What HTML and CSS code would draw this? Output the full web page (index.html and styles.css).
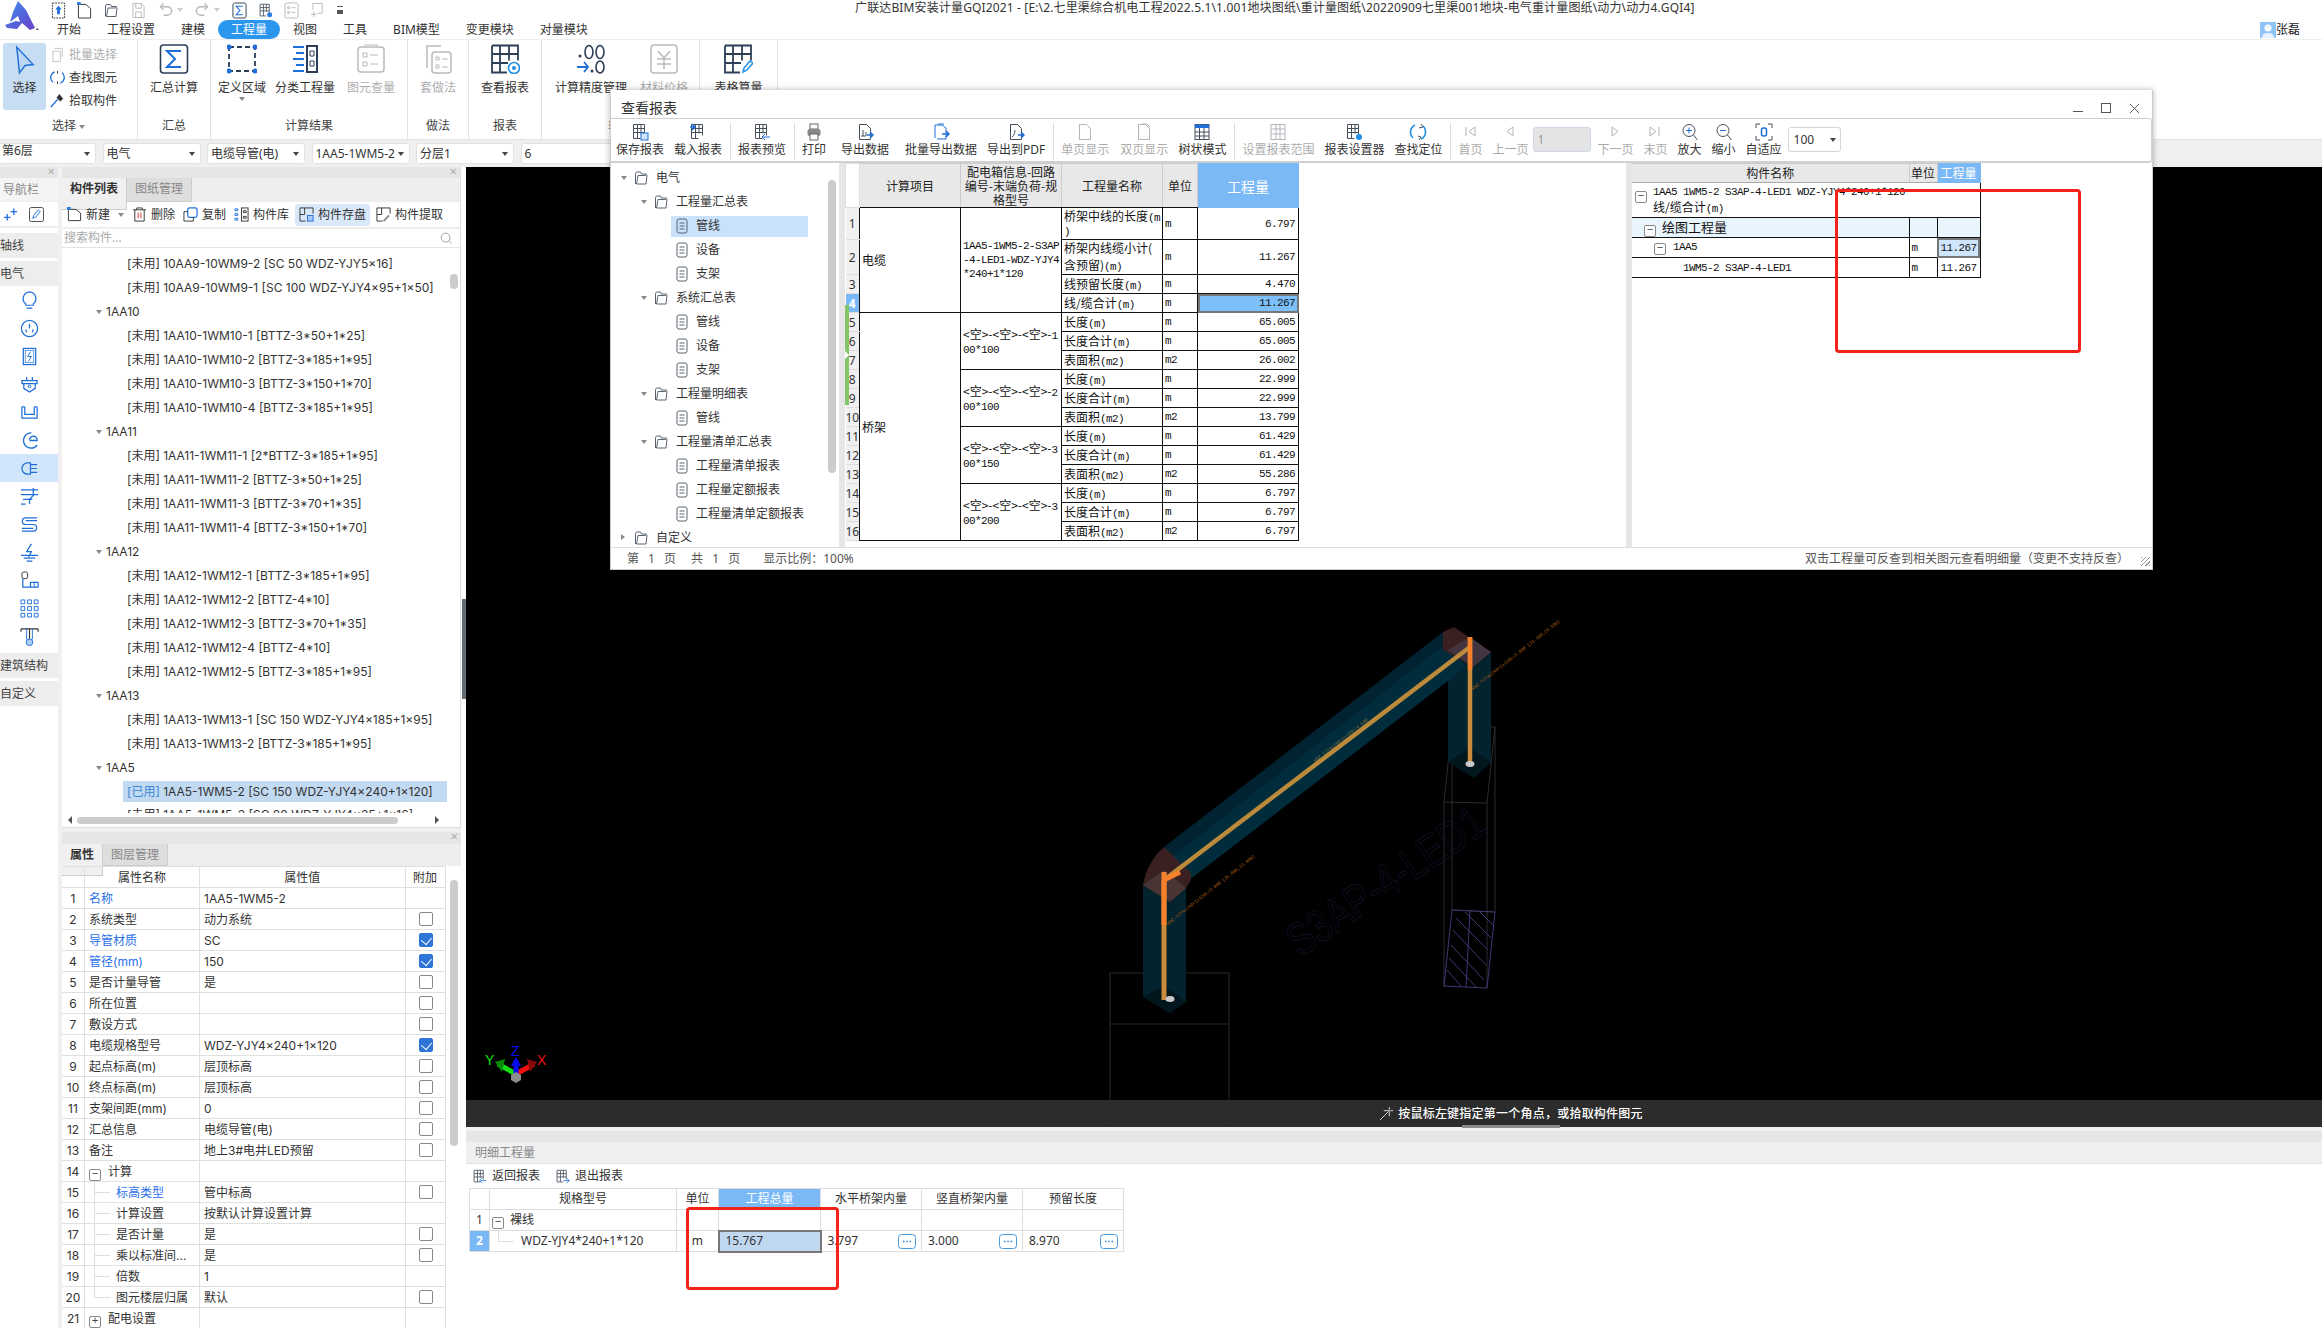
FILE: index.html
```html
<!DOCTYPE html>
<html lang="zh-CN">
<head>
<meta charset="utf-8">
<title>广联达BIM安装计量GQI2021</title>
<link rel="stylesheet" href="styles.css">
</head>
<body>
<svg class="defs" width="0" height="0" aria-hidden="true">
  <symbol id="g" viewBox="0 0 18 18"><path d="M2.5 1.5h11v11M2.5 1.5v14h7M2.5 5.5h11M2.5 9.5h11M6.5 1.5v14M10 1.5v9" fill="none" stroke="#46505c"/></symbol>
  <symbol id="doc" viewBox="0 0 18 18"><path d="M3.5 1.5h7l4 4v11h-11z" fill="none" stroke="#46505c"/></symbol>
  <symbol id="list" viewBox="0 0 12 16"><rect x="1" y="1" width="10" height="14" rx="2" fill="none" stroke="#5a6470"/><path d="M3.5 5h5M3.5 8h5M3.5 11h5" stroke="#5a6470"/></symbol>
  <symbol id="folder" viewBox="0 0 15 16"><path d="M1.5 14V3.5l1-1.5h4l1 2h5l-1 1.5H4L2.5 14h9.500l1-9" fill="none" stroke="#5a6470"/></symbol>
  <symbol id="mag" viewBox="0 0 18 18"><circle cx="8" cy="7.500" r="6" fill="none" stroke="#46505c"/><path d="M12.500 12l4 5" stroke="#46505c"/></symbol>
  <symbol id="more" viewBox="0 0 18 15"><rect x=".5" y=".5" width="17" height="14" rx="3" fill="#fff" stroke="#4a9ade"/><path d="M5 7.500h1.500M8.300 7.500h1.500M11.600 7.500h1.500" stroke="#2f7fd0" stroke-width="1.500"/></symbol>
</svg>

<div class="app">
  <header class="top">
    <svg class="logo" viewBox="0 0 36 32"><defs><linearGradient id="lg" x1="0" y1="0" x2="1" y2="1"><stop offset="0" stop-color="#3d8ef0"/><stop offset="1" stop-color="#6a3fc8"/></linearGradient></defs><path d="M15 1l8 9 9 18-5 2-8-7-5 6-10-1-2-3 11-4 4 1-2-6-8 6 3-10z" fill="url(#lg)"/><path d="M34 28l2 2h-3z" fill="#444"/></svg>
    <div class="top-rows">
      <div class="qa">
        <svg class="qi" viewBox="0 0 16 18"><rect x="1.500" y="1" width="13" height="16" fill="none" stroke="#333" stroke-dasharray="2 1"/><path d="M8 4l3.500 4H9.500v5h-3V8H4.500z" fill="#1f6fd8"/></svg>
        <svg class="qi qg1" viewBox="0 0 16 18"><path d="M1.500 2.500h8l5 4.500v10h-13z" fill="none" stroke="#333"/><path d="M0 0h4v3H0z" fill="#2a7fe0"/></svg>
        <svg class="qi qg2" viewBox="0 0 16 18"><use href="#folder" width="16" height="18"/></svg>
        <svg class="qi qg2 off" viewBox="0 0 16 18"><path d="M2 1.500h9l3 3v12H2zM5 1.500v5h6v-5M5 16.500v-6h6v6" fill="none" stroke="#555"/></svg>
        <svg class="qi qg3 off" viewBox="0 0 16 18"><path d="M4 5h6a4.500 4.500 0 0 1 0 9H6M6 1.500L2.500 5 6 8.500" fill="none" stroke="#555" stroke-width="1.500"/></svg>
        <span class="caret off"></span>
        <svg class="qi qg4 off" viewBox="0 0 16 18"><path d="M12 5H6a4.500 4.500 0 0 0 0 9h4M10 1.500L13.500 5 10 8.500" fill="none" stroke="#555" stroke-width="1.500"/></svg>
        <span class="caret off"></span>
        <svg class="qi qg5" viewBox="0 0 16 18"><rect x="1" y="1" width="14" height="16" rx="2" fill="none" stroke="#2c3f58"/><path d="M11.500 4.500h-7l4 4.500-4 4.500h7" fill="none" stroke="#1f6fd8" stroke-width="1.200"/></svg>
        <svg class="qi qg6" viewBox="0 0 18 18"><use href="#g"/><circle cx="14" cy="14" r="3" fill="#2a7fe0"/></svg>
        <svg class="qi qg6 off" viewBox="0 0 16 18"><rect x="1" y="1" width="14" height="16" rx="2" fill="none" stroke="#555"/><path d="M4 5h2v2H4zM4 10h2v2H4zM8 6h4M8 11h4" fill="none" stroke="#555"/></svg>
        <svg class="qi qg6 off" viewBox="0 0 16 18"><path d="M3 8V1.500h10V12H8M1 13h6M4 10v6" fill="none" stroke="#555"/></svg>
        <span class="qmore"></span>
      </div>
      <div class="title">广联达BIM安装计量GQI2021 - [E:\2.七里渠综合机电工程2022.5.1\1.001地块图纸\重计量图纸\20220909七里渠001地块-电气重计量图纸\动力\动力4.GQI4]</div>
      <nav class="tabs">
        <span class="tab">开始</span><span class="tab">工程设置</span><span class="tab">建模</span><span class="tab active">工程量</span><span class="tab">视图</span><span class="tab">工具</span><span class="tab">BIM模型</span><span class="tab">变更模块</span><span class="tab">对量模块</span>
        <span class="user"><svg class="avatar" viewBox="0 0 16 16"><rect width="16" height="16" fill="#8fc4fb"/><circle cx="8" cy="6" r="3.500" fill="#fff"/><path d="M2 16c0-4 3-5 6-5s6 1 6 5z" fill="#e8f3fe"/><path d="M4 5h8" stroke="#cfe5fc"/></svg>张磊</span>
      </nav>
    </div>
  </header>

  <section class="ribbon">
    <div class="rg w138">
      <div class="rg-body sel">
        <div class="select-big">
          <svg class="bigicon cur" viewBox="0 0 24 32"><path d="M3 2l18 19-9 1-6 8z" fill="#bcd8f5" stroke="#1f6fd8" stroke-width="1.600"/></svg>
          <span>选择</span>
        </div>
        <div class="small-col">
          <div class="sm off"><svg class="i15" viewBox="0 0 16 16"><path d="M5 1.500h8v9M3 4.500h8v11H3z" fill="none" stroke="#666"/></svg>批量选择</div>
          <div class="sm"><svg class="i15" viewBox="0 0 16 16"><path d="M5 2a6.500 6.500 0 0 0-2 11M11 14a6.500 6.500 0 0 0 2-11" fill="none" stroke="#1f6fd8" stroke-width="1.400"/><path d="M8 1v3M8 12v3" stroke="#333"/></svg>查找图元</div>
          <div class="sm"><svg class="i15" viewBox="0 0 16 16"><path d="M1 15l7-8" stroke="#1f6fd8" stroke-width="1.500"/><path d="M7 5l4 4 3-3-4-5z" fill="#333"/></svg>拾取构件</div>
        </div>
      </div>
      <div class="rg-label">选择 <span class="caret"></span></div>
    </div>
    <div class="rg w73">
      <div class="rg-body center">
        <div class="rb"><svg class="bigicon" viewBox="0 0 30 30"><rect x="1.500" y="1" width="27" height="28" rx="3" fill="none" stroke="#2c3f58" stroke-width="1.600"/><path d="M22 7H8l8 8-8 8h14" fill="none" stroke="#1f6fd8" stroke-width="2"/></svg><span>汇总计算</span></div>
      </div>
      <div class="rg-label">汇总</div>
    </div>
    <div class="rg w197">
      <div class="rg-body calc">
        <div class="rb"><svg class="bigicon" viewBox="0 0 30 30"><rect x="2" y="3" width="26" height="24" fill="none" stroke="#2c3f58" stroke-width="1.800" stroke-dasharray="5 3"/><path d="M2 3h.1M28 3h.1M2 27h.1M28 27h.1" stroke="#1f6fd8" stroke-width="5" stroke-linecap="round"/></svg><span>定义区域</span><i class="caret drop"></i></div>
        <div class="rb"><svg class="bigicon" viewBox="0 0 30 30"><path d="M3 3h11M6 9h8M3 15h11M6 21h8M3 27h11" stroke="#1f6fd8" stroke-width="2"/><rect x="17" y="2" width="10" height="26" fill="none" stroke="#2c3f58" stroke-width="2"/><path d="M20 7h4v5h-4zM20 17h4v5h-4z" fill="none" stroke="#2c3f58"/></svg><span>分类工程量</span></div>
        <div class="rb off"><svg class="bigicon" viewBox="0 0 30 30"><rect x="2" y="3" width="26" height="25" rx="3" fill="none" stroke="#555" stroke-width="1.500"/><path d="M7 9h4v4H7zM7 18h4v4H7zM14 11h8M14 20h8M8 1h14" fill="none" stroke="#555"/></svg><span>图元查量</span></div>
      </div>
      <div class="rg-label">计算结果</div>
    </div>
    <div class="rg w61">
      <div class="rg-body center">
        <div class="rb off"><svg class="bigicon" viewBox="0 0 30 30"><path d="M4 24V2h14" fill="none" stroke="#555" stroke-width="1.500"/><rect x="9" y="8" width="19" height="21" rx="3" fill="none" stroke="#555" stroke-width="1.500"/><path d="M13 13h3v3h-3zM13 21h3v3h-3zM19 15h6M19 23h6" fill="none" stroke="#555"/></svg><span>套做法</span></div>
      </div>
      <div class="rg-label">做法</div>
    </div>
    <div class="rg w73">
      <div class="rg-body center">
        <div class="rb"><svg class="bigicon" viewBox="0 0 30 30"><path d="M2 1.500h26v15M2 1.500v27h15M2 10h26M2 19h16M10 1.500v27M19 1.500v15" fill="none" stroke="#2c3f58" stroke-width="1.800"/><circle cx="24" cy="24" r="5.500" fill="#fff" stroke="#1f8fe8" stroke-width="1.600"/><circle cx="24" cy="24" r="2" fill="#1f8fe8"/></svg><span>查看报表</span></div>
      </div>
      <div class="rg-label">报表</div>
    </div>
    <div class="rg w158">
      <div class="rg-body assist">
        <div class="rb"><svg class="bigicon" viewBox="0 0 30 30"><circle cx="4" cy="12" r="1.500" fill="#2c3f58"/><ellipse cx="13" cy="8" rx="4" ry="6.500" fill="none" stroke="#2c3f58" stroke-width="1.600"/><ellipse cx="24" cy="8" rx="4" ry="6.500" fill="none" stroke="#2c3f58" stroke-width="1.600"/><path d="M1 23h11M8 18l4 5-4 5" fill="none" stroke="#1f6fd8" stroke-width="1.800"/><circle cx="16" cy="27" r="1.500" fill="#2c3f58"/><ellipse cx="24" cy="23" rx="4" ry="6" fill="none" stroke="#2c3f58" stroke-width="1.600"/></svg><span>计算精度管理</span></div>
        <div class="rb off"><svg class="bigicon" viewBox="0 0 30 30"><rect x="2" y="1" width="26" height="28" rx="3" fill="none" stroke="#555" stroke-width="1.500"/><path d="M9 7l6 7 6-7M8 15h14M8 20h14M15 14v11" fill="none" stroke="#555" stroke-width="1.500"/></svg><span>材料价格</span></div>
      </div>
      <div class="rg-label">辅助</div>
    </div>
    <div class="rg w78">
      <div class="rg-body center">
        <div class="rb"><svg class="bigicon" viewBox="0 0 30 30"><path d="M2 1.500h26v15M2 1.500v27h15M2 10h26M2 19h16M10 1.500v27M19 1.500v15" fill="none" stroke="#2c3f58" stroke-width="1.800"/><path d="M20 28l1-4 6-7 3 2-6 7z" fill="none" stroke="#1f8fe8" stroke-width="1.500"/></svg><span>表格算量</span></div>
      </div>
      <div class="rg-label">&nbsp;</div>
    </div>
  </section>

  <section class="selectors">
    <div class="sbox first">第6层<i class="caret dark"></i></div>
    <div class="sbox">电气<i class="caret dark"></i></div>
    <div class="sbox">电缆导管(电)<i class="caret dark"></i></div>
    <div class="sbox">1AA5-1WM5-2<i class="caret dark"></i></div>
    <div class="sbox">分层1<i class="caret dark"></i></div>
    <div class="sbox">6</div>
  </section>

  <section class="work">
    <aside class="nav">
      <div class="close-band"><span class="x">×</span></div>
      <div class="nav-title">导航栏</div>
      <div class="nav-tools">
        <svg class="i15" viewBox="0 0 16 16"><path d="M1 11h7M4.500 7.500v7M8 5h7M11.500 1.500v7" stroke="#1f6fd8" stroke-width="1.400"/></svg>
        <svg class="nav-edit" viewBox="0 0 16 16"><rect x=".5" y=".5" width="15" height="15" rx="2" fill="none" stroke="#444"/><path d="M4 12l1-3 5-6 2 2-5 6z" fill="none" stroke="#1f6fd8"/></svg>
      </div>
      <div class="nav-head">轴线</div>
      <div class="nav-head">电气</div>
      <div class="nav-ic"><svg viewBox="0 0 20 20"><path d="M10 1a7 7 0 0 0-4 12.500V15h8v-1.500A7 7 0 0 0 10 1zM7 18h6" fill="none" stroke="#1f6fd8" stroke-width="1.300"/></svg></div>
      <div class="nav-ic"><svg viewBox="0 0 20 20"><circle cx="10" cy="10" r="8.500" fill="none" stroke="#1f6fd8" stroke-width="1.300"/><path d="M10 5v5M6 11l1 3M14 11l-1 3" stroke="#1f6fd8" stroke-width="1.300"/></svg></div>
      <div class="nav-ic"><svg viewBox="0 0 20 20"><rect x="3.500" y="1.500" width="13" height="17" fill="none" stroke="#1f6fd8" stroke-width="1.300"/><rect x="5.500" y="3.500" width="9" height="13" fill="none" stroke="#1f6fd8" stroke-width=".7"/><path d="M11 5l-3 5h4l-3 5" fill="none" stroke="#1f6fd8"/></svg></div>
      <div class="nav-ic"><svg viewBox="0 0 20 20"><path d="M2 6h16v3H2zM4 9v5l6 4 6-4V9M7 6V2M13 6V2" fill="none" stroke="#1f6fd8" stroke-width="1.300"/><circle cx="10" cy="12" r="1.500" fill="none" stroke="#1f6fd8"/></svg></div>
      <div class="nav-ic"><svg viewBox="0 0 20 20"><path d="M2 4v12h16V4M5 4v8h10V4M2 4h3M15 4h3" fill="none" stroke="#1f6fd8" stroke-width="1.300"/></svg></div>
      <div class="nav-ic"><svg viewBox="0 0 20 20"><path d="M12 2a8 8 0 1 0 6 13M10 10h8a4 4 0 0 0-8-1" fill="none" stroke="#1f6fd8" stroke-width="1.500"/></svg></div>
      <div class="nav-ic on"><svg viewBox="0 0 20 20"><path d="M8 4a6 6 0 0 0 0 12h3V4zM11 6h7M11 10h7M11 14h7" fill="none" stroke="#1f6fd8" stroke-width="1.300"/></svg></div>
      <div class="nav-ic"><svg viewBox="0 0 20 20"><path d="M1 3h18M1 8h18M3 13h10M1 18h5M14 1v8l-4 4v5" fill="none" stroke="#1f6fd8" stroke-width="1.300"/></svg></div>
      <div class="nav-ic"><svg viewBox="0 0 20 20"><path d="M18 3H6a3.500 3.500 0 0 0 0 7h8a3.500 3.500 0 0 1 0 7H2M18 6H6M2 14h12" fill="none" stroke="#1f6fd8" stroke-width="1.300"/></svg></div>
      <div class="nav-ic"><svg viewBox="0 0 20 20"><path d="M12 1L7 9h5l-3 6M1 13h18M4 16h12M7 19h6" fill="none" stroke="#1f6fd8" stroke-width="1.300"/></svg></div>
      <div class="nav-ic"><svg viewBox="0 0 20 20"><rect x="2" y="1" width="6" height="7" rx="2" fill="none" stroke="#333"/><path d="M3 8v9h8v-5h8v5h-8" fill="none" stroke="#1f6fd8" stroke-width="1.300"/><path d="M15 12v5" stroke="#1f6fd8"/></svg></div>
      <div class="nav-ic"><svg viewBox="0 0 20 20"><path d="M1 1h4v4H1zM8 1h4v4H8zM15 1h4v4h-4zM1 8h4v4H1zM8 8h4v4H8zM15 8h4v4h-4zM1 15h4v4H1zM8 15h4v4H8zM15 15h4v4h-4z" fill="none" stroke="#1f6fd8"/></svg></div>
      <div class="nav-ic"><svg viewBox="0 0 20 20"><path d="M1 2h18M1 2v3M19 2v3M10 2v11" stroke="#333" fill="none" stroke-width="1.200"/><path d="M7 2v11M13 2v11" stroke="#1f6fd8"/><circle cx="10" cy="16" r="3.500" fill="#a9cdf5" stroke="#1f6fd8"/></svg></div>
      <div class="nav-head">建筑结构</div>
      <div class="nav-head">自定义</div>
    </aside>

    <div class="leftcol">
      <section class="panel listp">
        <div class="close-band"><span class="x">×</span></div>
        <div class="ptabs"><span class="ptab cur">构件列表</span><span class="ptab w65">图纸管理</span></div>
        <div class="ltools">
          <span class="lt"><svg class="i15" viewBox="0 0 16 16"><path d="M1.500 2.500h8l5 4v8h-13z" fill="none" stroke="#333"/><path d="M0 0h4v3H0z" fill="#2a7fe0"/></svg>新建<i class="caret"></i></span>
          <span class="lt"><svg class="i15" viewBox="0 0 16 16"><path d="M1 3h14M5 3V1h6v2M3 3v12h10V3" fill="none" stroke="#333"/><path d="M6.500 6v6M9.500 6v6" stroke="#e02020"/></svg>删除</span>
          <span class="lt"><svg class="i15" viewBox="0 0 16 16"><rect x="5" y="1" width="10" height="10" rx="2" fill="none" stroke="#1f6fd8" stroke-width="1.300"/><path d="M5 5H1v10h10v-4" fill="none" stroke="#333"/></svg>复制</span>
          <span class="lt"><svg class="i15" viewBox="0 0 16 16"><path d="M1 2h3v2H1zM1 7h3v2H1zM1 12h3v2H1z" fill="none" stroke="#1f6fd8"/><rect x="8" y="1" width="7" height="14" fill="none" stroke="#333"/><path d="M10 4h3v2h-3zM10 10h3v2h-3z" fill="none" stroke="#333"/></svg>构件库</span>
          <span class="lt hot"><svg class="i15" viewBox="0 0 16 16"><path d="M15 7V1H1v14h6M1 8h5M6 1v7" fill="none" stroke="#333"/><rect x="9" y="9" width="6" height="6" fill="#a9cdf5" stroke="#1f6fd8"/></svg>构件存盘</span>
          <span class="lt"><svg class="i15" viewBox="0 0 16 16"><path d="M15 7V1H1v14h6M1 8h5M6 1v7" fill="none" stroke="#333"/><path d="M8 15l6-6" stroke="#888" stroke-width="2"/></svg>构件提取</span>
        </div>
        <div class="search"><span>搜索构件...</span><svg class="i12" viewBox="0 0 14 14"><circle cx="6" cy="6" r="4.800" fill="none" stroke="#999"/><path d="M9.500 9.500l3 3" stroke="#999"/></svg></div>
        <div class="lbody">
          <div class="li">[未用] 10AA9-10WM9-2 [SC 50 WDZ-YJY5x16]</div>
          <div class="li">[未用] 10AA9-10WM9-1 [SC 100 WDZ-YJY4x95+1x50]</div>
          <div class="lg">1AA10</div>
          <div class="li">[未用] 1AA10-1WM10-1 [BTTZ-3*50+1*25]</div>
          <div class="li">[未用] 1AA10-1WM10-2 [BTTZ-3*185+1*95]</div>
          <div class="li">[未用] 1AA10-1WM10-3 [BTTZ-3*150+1*70]</div>
          <div class="li">[未用] 1AA10-1WM10-4 [BTTZ-3*185+1*95]</div>
          <div class="lg">1AA11</div>
          <div class="li">[未用] 1AA11-1WM11-1 [2*BTTZ-3*185+1*95]</div>
          <div class="li">[未用] 1AA11-1WM11-2 [BTTZ-3*50+1*25]</div>
          <div class="li">[未用] 1AA11-1WM11-3 [BTTZ-3*70+1*35]</div>
          <div class="li">[未用] 1AA11-1WM11-4 [BTTZ-3*150+1*70]</div>
          <div class="lg">1AA12</div>
          <div class="li">[未用] 1AA12-1WM12-1 [BTTZ-3*185+1*95]</div>
          <div class="li">[未用] 1AA12-1WM12-2 [BTTZ-4*10]</div>
          <div class="li">[未用] 1AA12-1WM12-3 [BTTZ-3*70+1*35]</div>
          <div class="li">[未用] 1AA12-1WM12-4 [BTTZ-4*10]</div>
          <div class="li">[未用] 1AA12-1WM12-5 [BTTZ-3*185+1*95]</div>
          <div class="lg">1AA13</div>
          <div class="li">[未用] 1AA13-1WM13-1 [SC 150 WDZ-YJY4x185+1x95]</div>
          <div class="li">[未用] 1AA13-1WM13-2 [BTTZ-3*185+1*95]</div>
          <div class="lg">1AA5</div>
          <div class="li act"><span class="used">[已用]</span> 1AA5-1WM5-2 [SC 150 WDZ-YJY4x240+1x120]</div>
          <div class="li">[未用] 1AA5-1WM5-3 [SC 80 WDZ-YJY4x35+1x16]</div>
          <span class="vthumb"></span>
        </div>
        <div class="hscroll"><i class="tri-l"></i><span class="hthumb"></span><i class="tri-r"></i></div>
      </section>

      <section class="panel attrp">
        <div class="close-band tall"><span class="x">×</span></div>
        <div class="ptabs h22"><span class="ptab cur w41">属性</span><span class="ptab w65">图层管理</span></div>
        <div class="attr-wrap">
        <table class="attr">
          <colgroup><col class="c1"><col class="c2"><col class="c3"><col class="c4"></colgroup>
          <thead><tr><th></th><th>属性名称</th><th>属性值</th><th>附加</th></tr></thead>
          <tbody>
            <tr><td class="n">1</td><td class="blue">名称</td><td>1AA5-1WM5-2</td><td></td></tr>
            <tr><td class="n">2</td><td>系统类型</td><td>动力系统</td><td><i class="cb"></i></td></tr>
            <tr><td class="n">3</td><td class="blue">导管材质</td><td>SC</td><td><i class="cb on"></i></td></tr>
            <tr><td class="n">4</td><td class="blue">管径(mm)</td><td>150</td><td><i class="cb on"></i></td></tr>
            <tr><td class="n">5</td><td>是否计量导管</td><td>是</td><td><i class="cb"></i></td></tr>
            <tr><td class="n">6</td><td>所在位置</td><td></td><td><i class="cb"></i></td></tr>
            <tr><td class="n">7</td><td>敷设方式</td><td></td><td><i class="cb"></i></td></tr>
            <tr><td class="n">8</td><td>电缆规格型号</td><td>WDZ-YJY4x240+1x120</td><td><i class="cb on"></i></td></tr>
            <tr><td class="n">9</td><td>起点标高(m)</td><td>层顶标高</td><td><i class="cb"></i></td></tr>
            <tr><td class="n">10</td><td>终点标高(m)</td><td>层顶标高</td><td><i class="cb"></i></td></tr>
            <tr><td class="n">11</td><td>支架间距(mm)</td><td>0</td><td><i class="cb"></i></td></tr>
            <tr><td class="n">12</td><td>汇总信息</td><td>电缆导管(电)</td><td><i class="cb"></i></td></tr>
            <tr><td class="n">13</td><td>备注</td><td>地上3#电井LED预留</td><td><i class="cb"></i></td></tr>
            <tr><td class="n">14</td><td class="grp"><i class="pm">−</i>计算</td><td></td><td></td></tr>
            <tr><td class="n">15</td><td class="sub blue">标高类型</td><td>管中标高</td><td><i class="cb"></i></td></tr>
            <tr><td class="n">16</td><td class="sub">计算设置</td><td>按默认计算设置计算</td><td></td></tr>
            <tr><td class="n">17</td><td class="sub">是否计量</td><td>是</td><td><i class="cb"></i></td></tr>
            <tr><td class="n">18</td><td class="sub">乘以标准间...</td><td>是</td><td><i class="cb"></i></td></tr>
            <tr><td class="n">19</td><td class="sub">倍数</td><td>1</td><td></td></tr>
            <tr><td class="n">20</td><td class="sub last">图元楼层归属</td><td>默认</td><td><i class="cb"></i></td></tr>
            <tr><td class="n">21</td><td class="grp"><i class="pm">+</i>配电设置</td><td></td><td></td></tr>
          </tbody>
        </table>
        <span class="athumb"></span>
        </div>
      </section>
    </div>

    <div class="split"><span class="split-thumb"></span></div>

    <main class="main">
      <div class="canvas"></div>
      <div class="strip"><svg class="i15" viewBox="0 0 16 16"><path d="M1 15l9-9M5 5h6v6M11 1v3M15 5h-3" fill="none" stroke="#ddd"/></svg><span>按鼠标左键指定第一个角点，或拾取构件图元</span></div>
      <svg class="scene" viewBox="466 167 1856 960" aria-hidden="false">
        <g fill="none" stroke="#2a2a2a"><path d="M1110 1127V973H1229V1127M1110 1024H1229"/></g>
        <g fill="none" stroke="#2b2b33"><path d="M1452 726L1495 727 1487 803 1444 802zM1444 802V987M1487 803V988M1452 726V910M1495 727V912M1452 910L1495 912"/></g>
        <g fill="none" stroke="#3b3a75"><path d="M1452 910L1495 912 1487 988 1444 986z"/><path d="M1470 911L1466 987M1456 918L1488 950M1453 930L1486 965M1451 945L1484 980M1449 958L1476 987M1447 970L1462 987M1465 912L1491 938M1480 912L1493 925"/></g>
        <text class="watermark" transform="translate(1300 958) rotate(-34) scale(1.650 2.100)">S3AP-4-LED1</text>
        <polygon points="1143,885 1186,885 1186,1002 1170,1013 1143,997" fill="#03232f"/>
        <polygon points="1143,997 1164,985 1186,1002 1170,1013" fill="#01161d"/>
        <polygon points="1448,650 1491,652 1491,762 1474,778 1448,762" fill="#03232f"/>
        <polygon points="1448,762 1470,748 1491,762 1474,778" fill="#01161d"/>
        <polygon points="1164,847 1443,632 1466,667 1189,880" fill="#012331"/>
        <polygon points="1172,857 1448,642 1466,667 1189,880" fill="#012c3c"/>
        <path d="M1164 847L1191 873V880L1186 888 1170 902 1143 885Q1147 862 1164 847Z" fill="#3a2020"/>
        <path d="M1143 885L1164 870 1186 888 1170 902Z" fill="#4a3535"/>
        <path d="M1443 632L1454 627 1491 652 1473 667 1443 650Z" fill="#3a2020"/>
        <path d="M1448 650L1470 637 1491 652 1473 667Z" fill="#423440"/>
        <path d="M1470 647L1164 880" stroke="#bb8a3a" stroke-width="4.500"/>
        <path d="M1164 880V1000" stroke="#c98c3c" stroke-width="5"/>
        <path d="M1470 637V762" stroke="#c98c3c" stroke-width="4.500"/>
        <path d="M1164 872V925M1164 880L1180 872" stroke="#f7802a" stroke-width="5" fill="none"/>
        <path d="M1470 637V670" stroke="#f7802a" stroke-width="4.500"/>
        <ellipse cx="1170" cy="999" rx="4.500" ry="3" fill="#c8c8c8"/>
        <ellipse cx="1470" cy="764" rx="4.500" ry="3" fill="#c8c8c8"/>
        <text class="tag" transform="translate(1168 925) rotate(-38)">WDZ-YJY4x240+1x120L=3.900 [35.886,23.800]</text>
        <text class="tag" transform="translate(1473 690) rotate(-38)">WDZ-YJY4x240+1x120L=3.900 [34.100,28.500]</text>
        <text class="tag dim" transform="translate(1315 762) rotate(-38)">WDZ-YJY4x240+1x120L=4.500</text>
        <g class="axes">
          <path d="M516 1074L498 1064" stroke="#12e012" stroke-width="5"/><path d="M495 1062L505 1059 502 1072z" fill="#0a8a0a"/>
          <path d="M516 1074L534 1064" stroke="#f01010" stroke-width="5"/><path d="M537 1062L527 1059 530 1072z" fill="#8a0a0a"/>
          <path d="M516 1076V1060" stroke="#0b0bf0" stroke-width="5"/><path d="M516 1057L521 1066H511z" fill="#0b0bf0"/>
          <path d="M511 1075L516 1072 521 1075V1080L516 1083 511 1080z" fill="#8c8c8c"/>
          <text x="485" y="1065" fill="#12e012">Y</text><text x="511" y="1056" fill="#0b0bf0">Z</text><text x="537" y="1065" fill="#f01010">X</text>
        </g>
      </svg>
      <span class="strip-bar"></span>
      <section class="detail">
        <div class="close-band"></div>
        <div class="dt-title">明细工程量</div>
        <div class="dt-tools">
          <span class="dtb"><svg class="i15" viewBox="0 0 18 18"><use href="#g"/><path d="M10 14h7M12 11l-3 3 3 3" fill="none" stroke="#1f6fd8"/></svg>返回报表</span>
          <span class="dtb"><svg class="i15" viewBox="0 0 18 18"><use href="#g"/><path d="M10 14h7M14 11l3 3-3 3" fill="none" stroke="#1f6fd8"/></svg>退出报表</span>
        </div>
        <table class="dtg">
          <colgroup><col class="d1"><col class="d2"><col class="d3"><col class="d4"><col class="d5"><col class="d5"><col class="d5"></colgroup>
          <thead><tr><th></th><th>规格型号</th><th>单位</th><th class="hl">工程总量</th><th>水平桥架内量</th><th>竖直桥架内量</th><th>预留长度</th></tr></thead>
          <tbody>
            <tr><td class="dn">1</td><td class="dg"><i class="pm">−</i>裸线</td><td></td><td></td><td></td><td></td><td></td></tr>
            <tr><td class="dn sel">2</td><td class="ds">WDZ-YJY4*240+1*120</td><td class="cu">m</td><td class="dv cellsel">15.767</td><td class="dv">3.797<svg class="morebtn"><use href="#more"/></svg></td><td class="dv">3.000<svg class="morebtn"><use href="#more"/></svg></td><td class="dv">8.970<svg class="morebtn"><use href="#more"/></svg></td></tr>
          </tbody>
        </table>
      </section>
    </main>
  </section>

  <section class="dialog">
    <header class="dlg-title"><span>查看报表</span>
      <span class="win"><i class="w-min"></i><i class="w-max"></i><svg class="w-x" viewBox="0 0 12 12"><path d="M1 1l10 10M11 1L1 11" stroke="#555"/></svg></span>
    </header>
    <div class="dlg-tools">
      <span class="tb"><svg viewBox="0 0 18 18"><use href="#g"/><rect x="10" y="10" width="7" height="7" fill="#cfe5fc" stroke="#1f6fd8"/></svg>保存报表</span>
      <span class="tb"><svg viewBox="0 0 18 18"><use href="#g"/><path d="M1 4h5M3 1l3 3-3 3" fill="none" stroke="#1f6fd8" stroke-width="1.500"/></svg>载入报表</span>
      <i class="sep"></i>
      <span class="tb"><svg viewBox="0 0 18 18"><use href="#g"/><path d="M10 14h7M12 11l-3 3 3 3" fill="none" stroke="#1f6fd8"/></svg>报表预览</span>
      <i class="sep"></i>
      <span class="tb"><svg viewBox="0 0 18 18"><rect x="5" y="1" width="8" height="5" fill="none" stroke="#666"/><rect x="2.500" y="6" width="13" height="7" rx="2" fill="#888"/><rect x="5" y="11" width="8" height="6" fill="#fff" stroke="#666"/></svg>打印</span>
      <span class="tb ml5"><svg viewBox="0 0 18 18"><use href="#doc"/><path d="M7 7v6M10 9v4M5 13h5" stroke="#46505c"/><path d="M11 12h6M14 9l3 3-3 3" fill="none" stroke="#1f6fd8" stroke-width="1.500"/></svg>导出数据</span>
      <span class="tb ml6"><svg viewBox="0 0 18 18"><path d="M3 15V2h7l4 3v11H5" fill="none" stroke="#1f6fd8"/><path d="M6 1h6" stroke="#1f6fd8"/><path d="M10 11h7M14 8l3 3-3 3" fill="none" stroke="#1f6fd8" stroke-width="1.500"/></svg>批量导出数据</span>
      <span class="tb"><svg viewBox="0 0 18 18"><use href="#doc"/><path d="M11 12h6M14 9l3 3-3 3" fill="none" stroke="#1f6fd8" stroke-width="1.500"/><path d="M5 14c2-1 3-5 3-7" fill="none" stroke="#46505c"/></svg>导出到PDF</span>
      <i class="sep"></i>
      <span class="tb off"><svg viewBox="0 0 18 18"><use href="#doc"/></svg>单页显示</span>
      <span class="tb off ml1"><svg viewBox="0 0 18 18"><use href="#doc"/><path d="M7 1h5l3 3" fill="none" stroke="#46505c"/></svg>双页显示</span>
      <span class="tb"><svg viewBox="0 0 18 18"><rect x="2" y="1.500" width="14" height="15" fill="none" stroke="#46505c"/><rect x="2" y="1.500" width="14" height="3.500" fill="#1f6fd8"/><path d="M2 9h14M2 13h14M6.500 5v11M11 5v11" stroke="#46505c"/></svg>树状模式</span>
      <i class="sep"></i>
      <span class="tb off"><svg viewBox="0 0 18 18"><rect x="2" y="1.500" width="14" height="15" fill="none" stroke="#46505c"/><path d="M2 6h14M2 11h14M7 1.500v15M11 1.500v15" stroke="#46505c"/></svg>设置报表范围</span>
      <span class="tb"><svg viewBox="0 0 18 18"><use href="#g"/><circle cx="14" cy="14" r="3" fill="#1f8fe8"/></svg>报表设置器</span>
      <span class="tb"><svg viewBox="0 0 18 18"><path d="M6 2a8 8 0 0 0-2 13M12 16a8 8 0 0 0 2-13" fill="none" stroke="#1f8fe8" stroke-width="1.600"/><path d="M12 1l2 3-4 1M9 13l3 1-2 3" fill="none" stroke="#46505c"/></svg>查找定位</span>
      <i class="sep"></i>
      <span class="tb off"><svg viewBox="0 0 18 18"><path d="M5 4v9M14 4l-6 4.500 6 4.500z" fill="none" stroke="#46505c"/></svg>首页</span>
      <span class="tb off"><svg viewBox="0 0 18 18"><path d="M12 4L6 8.500l6 4.500z" fill="none" stroke="#46505c"/></svg>上一页</span>
      <span class="pg-in">1</span>
      <span class="tb off ml1"><svg viewBox="0 0 18 18"><path d="M6 4l6 4.500L6 13z" fill="none" stroke="#46505c"/></svg>下一页</span>
      <span class="tb off"><svg viewBox="0 0 18 18"><path d="M13 4v9M4 4l6 4.500L4 13z" fill="none" stroke="#46505c"/></svg>末页</span>
      <span class="tb"><svg viewBox="0 0 18 18"><use href="#mag"/><path d="M5 7.500h6M8 4.500v6" stroke="#1f6fd8"/></svg>放大</span>
      <span class="tb"><svg viewBox="0 0 18 18"><use href="#mag"/><path d="M5 7.500h6" stroke="#1f6fd8"/></svg>缩小</span>
      <span class="tb"><svg viewBox="0 0 18 18"><path d="M1 5V1h4M13 1h4v4M17 13v4h-4M5 17H1v-4" fill="none" stroke="#46505c"/><rect x="6.500" y="5" width="5" height="8" rx="2" fill="none" stroke="#1f6fd8" stroke-width="1.500"/></svg>自适应</span>
      <span class="pg-sel">100<i class="caret dark"></i></span>
    </div>
    <div class="dlg-body">
      <div class="dtree">
        <div class="tn l1"><i class="ar"></i><svg class="fd"><use href="#folder"/></svg>电气</div>
        <div class="tn l2"><i class="ar"></i><svg class="fd"><use href="#folder"/></svg>工程量汇总表</div>
        <div class="tn l3 on"><svg class="lf"><use href="#list"/></svg>管线</div>
        <div class="tn l3"><svg class="lf"><use href="#list"/></svg>设备</div>
        <div class="tn l3"><svg class="lf"><use href="#list"/></svg>支架</div>
        <div class="tn l2"><i class="ar"></i><svg class="fd"><use href="#folder"/></svg>系统汇总表</div>
        <div class="tn l3"><svg class="lf"><use href="#list"/></svg>管线</div>
        <div class="tn l3"><svg class="lf"><use href="#list"/></svg>设备</div>
        <div class="tn l3"><svg class="lf"><use href="#list"/></svg>支架</div>
        <div class="tn l2"><i class="ar"></i><svg class="fd"><use href="#folder"/></svg>工程量明细表</div>
        <div class="tn l3"><svg class="lf"><use href="#list"/></svg>管线</div>
        <div class="tn l2"><i class="ar"></i><svg class="fd"><use href="#folder"/></svg>工程量清单汇总表</div>
        <div class="tn l3"><svg class="lf"><use href="#list"/></svg>工程量清单报表</div>
        <div class="tn l3"><svg class="lf"><use href="#list"/></svg>工程量定额报表</div>
        <div class="tn l3"><svg class="lf"><use href="#list"/></svg>工程量清单定额报表</div>
        <div class="tn l1"><i class="ar right"></i><svg class="fd"><use href="#folder"/></svg>自定义</div>
        <span class="tree-thumb"></span>
      </div>
      <div class="rep">
        <span class="green"></span>
        <table class="rt">
          <colgroup><col class="r0"><col class="r1"><col class="r1"><col class="r1"><col class="r4"><col class="r1"></colgroup>
          <thead><tr class="h44"><th></th><th>计算项目</th><th>配电箱信息-回路<br>编号-末端负荷-规<br>格型号</th><th>工程量名称</th><th>单位</th><th class="hl big">工程量</th></tr></thead>
          <tbody>
            <tr class="h32"><td class="no">1</td><td rowspan="4" class="c">电缆</td><td rowspan="4">1AA5-1WM5-2-S3AP<br>-4-LED1-WDZ-YJY4<br>*240+1*120</td><td><span class="c">桥架中线的长度</span>(m<br>)</td><td>m</td><td class="v">6.797</td></tr>
            <tr class="h33"><td class="no">2</td><td><span class="c">桥架内线缆小计(<br>含预留)</span>(m)</td><td>m</td><td class="v">11.267</td></tr>
            <tr><td class="no">3</td><td><span class="c">线预留长度</span>(m)</td><td>m</td><td class="v">4.470</td></tr>
            <tr><td class="no nosel">4</td><td><span class="c">线/缆合计</span>(m)</td><td>m</td><td class="v vsel">11.267</td></tr>
            <tr><td class="no">5</td><td rowspan="12" class="c">桥架</td><td rowspan="3"><span class="c">&lt;空&gt;-&lt;空&gt;-&lt;空&gt;-</span>1<br>00*100</td><td><span class="c">长度</span>(m)</td><td>m</td><td class="v">65.005</td></tr>
            <tr><td class="no">6</td><td><span class="c">长度合计</span>(m)</td><td>m</td><td class="v">65.005</td></tr>
            <tr><td class="no">7</td><td><span class="c">表面积</span>(m2)</td><td>m2</td><td class="v">26.002</td></tr>
            <tr><td class="no">8</td><td rowspan="3"><span class="c">&lt;空&gt;-&lt;空&gt;-&lt;空&gt;-</span>2<br>00*100</td><td><span class="c">长度</span>(m)</td><td>m</td><td class="v">22.999</td></tr>
            <tr><td class="no">9</td><td><span class="c">长度合计</span>(m)</td><td>m</td><td class="v">22.999</td></tr>
            <tr><td class="no">10</td><td><span class="c">表面积</span>(m2)</td><td>m2</td><td class="v">13.799</td></tr>
            <tr><td class="no">11</td><td rowspan="3"><span class="c">&lt;空&gt;-&lt;空&gt;-&lt;空&gt;-</span>3<br>00*150</td><td><span class="c">长度</span>(m)</td><td>m</td><td class="v">61.429</td></tr>
            <tr><td class="no">12</td><td><span class="c">长度合计</span>(m)</td><td>m</td><td class="v">61.429</td></tr>
            <tr><td class="no">13</td><td><span class="c">表面积</span>(m2)</td><td>m2</td><td class="v">55.286</td></tr>
            <tr><td class="no">14</td><td rowspan="3"><span class="c">&lt;空&gt;-&lt;空&gt;-&lt;空&gt;-</span>3<br>00*200</td><td><span class="c">长度</span>(m)</td><td>m</td><td class="v">6.797</td></tr>
            <tr><td class="no">15</td><td><span class="c">长度合计</span>(m)</td><td>m</td><td class="v">6.797</td></tr>
            <tr><td class="no">16</td><td><span class="c">表面积</span>(m2)</td><td>m2</td><td class="v">6.797</td></tr>
          </tbody>
        </table>
      </div>
      <div class="side">
        <table class="st">
          <colgroup><col class="s1"><col class="s2"><col class="s3"></colgroup>
          <thead><tr><th>构件名称</th><th>单位</th><th class="hl">工程量</th></tr></thead>
          <tbody>
            <tr class="h34"><td colspan="3" class="first"><i class="pm">−</i><span>1AA5 1WM5-2 S3AP-4-LED1 WDZ-YJY4*240+1*120<br><span class="c">线/缆合计</span>(m)</span></td></tr>
            <tr class="band"><td class="t2"><i class="pm">−</i><span class="c big">绘图工程量</span></td><td></td><td></td></tr>
            <tr><td class="t3"><i class="pm">−</i>1AA5</td><td>m</td><td class="v ssel">11.267</td></tr>
            <tr><td class="t4">1WM5-2 S3AP-4-LED1</td><td>m</td><td class="v">11.267</td></tr>
          </tbody>
        </table>
      </div>
    </div>
    <footer class="dlg-status">
      <span class="st-l">第 1 页</span><span class="st-l ml15">共 1 页</span><span class="st-m">显示比例：100%</span>
      <span class="st-r">双击工程量可反查到相关图元查看明细量（变更不支持反查）</span><i class="grip"></i>
    </footer>
  </section>

  <div class="redbox rb1"></div>
  <div class="redbox rb2"></div>
</div>
</body>
</html>
```
FILE: styles.css
```css
*{box-sizing:border-box}
html,body{margin:0;padding:0}
body{background:#fff}
.defs{position:absolute}
.app{position:relative;width:2322px;height:1328px;overflow:hidden;display:flex;flex-direction:column;font:12px/16px "Noto Sans","Noto Sans CJK SC",sans-serif;color:#333;background:#fff}
i{font-style:normal}
.off{opacity:.4}
.caret{display:inline-block;width:0;height:0;border:3px solid transparent;border-top:4px solid #888;border-bottom:0;vertical-align:middle}
.caret.dark{border-top-color:#444}

/* top */
.top{height:40px;display:flex;position:relative;flex:none;border-bottom:1px solid #eee}
.logo{width:36px;height:32px;margin:0 0 0 3px;flex:none}
.top-rows{position:relative;flex:1}
.qa{display:flex;align-items:center;height:20px;margin-left:12px}
.qi{width:15px;height:17px;flex:none}
.qg1{margin-left:11px}.qg2{margin-left:12px}.qg3{margin-left:12px}.qg4{margin-left:12px}.qg5{margin-left:12px}.qg6{margin-left:11px}
.qa .caret{margin-left:4px}
.qmore{margin-left:12px;width:6px;height:8px;border-top:1px solid #555;border-bottom:4px solid #555;flex:none}
.title{position:absolute;left:816px;top:0;height:20px;line-height:16px;font-size:12px;white-space:nowrap;letter-spacing:.14px}
.tabs{height:19px;display:flex;align-items:center;margin-left:5px}
.tab{padding:0 13px;line-height:19px;height:19px;white-space:nowrap}
.tab.active{background:#2b96ee;color:#fff;border-radius:10px;width:62px;padding:0;text-align:center}
.user{margin-left:auto;margin-right:22px;display:flex;align-items:center;color:#222}
.avatar{width:16px;height:16px}

/* ribbon */
.ribbon{height:100px;flex:none;display:flex;background:#fff;border-bottom:1px solid #e3e3e3}
.rg{display:flex;flex-direction:column;border-right:1px solid #e2e2e2;flex:none}
.w138{width:138px}.w73{width:73px}.w197{width:197px}.w61{width:61px}.w158{width:158px}.w78{width:78px}
.rg-body{height:74px;display:flex}
.rg-label{height:24px;line-height:24px;text-align:center;color:#444}
.center{justify-content:center}
.rb{display:flex;flex-direction:column;align-items:center;padding-top:4px;white-space:nowrap;position:relative}
.bigicon{width:30px;height:30px;flex:none}
.rb span{margin-top:6px}
.drop{position:absolute;left:21px;top:57px}
.calc{padding-left:7px;gap:9px}
.calc .rb:last-child{margin-left:3px}
.assist{padding-left:13px;gap:13px}
.sel{padding-left:3px}
.select-big{width:43px;height:67px;margin-top:3px;background:#c7ddf3;border-radius:3px;display:flex;flex-direction:column;align-items:center;padding-top:1px}
.cur{width:22px;height:32px}
.select-big span{margin-top:4px}
.small-col{margin:3px 0 0 4px;display:flex;flex-direction:column}
.sm{display:flex;align-items:center;gap:4px;height:23px}
.i15{width:15px;height:15px;flex:none}
.i12{width:13px;height:13px;flex:none}

/* selectors */
.selectors{height:26px;flex:none;background:#efefef;display:flex;gap:6.500px;padding-top:3px}
.sbox{width:98px;height:21px;background:#fff;border:1px solid #e2e2e2;border-radius:3px;line-height:19px;padding:0 3px;position:relative;white-space:nowrap;overflow:hidden}
.sbox.first{margin-left:-2px;padding-left:3px}
.sbox .caret{position:absolute;right:5px;top:8px}

/* work */
.work{flex:1;display:flex;background:#f0f0f0;min-height:0;padding-top:1px}
.close-band{height:11px;background:#e6e6e6;position:relative;flex:none}
.close-band.tall{height:12px}
.x{position:absolute;right:3px;top:-3px;color:#aaa;font-size:13px;line-height:14px}
.nav{width:58px;flex:none;background:#fff;margin-right:4px;display:flex;flex-direction:column}
.nav-title{height:23px;line-height:23px;background:#f4f4f4;color:#888;padding-left:3px;flex:none}
.nav-tools{height:27px;display:flex;align-items:center;gap:11px;padding-left:3px;background:#fff;border-bottom:2px solid #eee;border-top:1px solid #eee;flex:none;margin-bottom:2px}
.nav-edit{width:15px;height:15px}
.nav-head{height:25px;line-height:26px;background:#ededed;margin-top:3px;flex:none;white-space:nowrap;color:#444}
.nav-ic{height:28px;display:flex;align-items:center;justify-content:center;flex:none}
.nav-ic svg{width:19px;height:19px}
.nav-ic.on{background:#d2e6fb}
.leftcol{width:399px;flex:none;display:flex;flex-direction:column;gap:4px}
.panel{background:#fff;display:flex;flex-direction:column;position:relative}
.listp{height:661px;border-right:1px solid #ddd;border-bottom:1px solid #ddd;flex:none}
.attrp{flex:1;min-height:0;overflow:hidden}
.ptabs{height:24px;display:flex;background:#eee;flex:none}
.ptabs.h22{height:22px}
.ptab{width:65px;line-height:22px;text-align:center;background:#dedede;color:#888;border-right:1px solid #ccc;border-bottom:1px solid #ccc}
.ptab.cur{background:#f0f0f0;color:#333;font-weight:700;border-right:1px solid #ccc}
.w41{width:41px}
.ltools{height:27px;display:flex;align-items:center;gap:4px;padding-left:3px;border-bottom:2px solid #eee;flex:none}
.lt{display:flex;align-items:center;gap:4px;height:22px;padding:0 2px;border-radius:3px;white-space:nowrap}
.lt .caret{margin-left:4px}
.lt.hot{background:#d9e9fa;padding:0 4px}
.search{height:19px;border-bottom:1px solid #e3e3e3;display:flex;align-items:center;justify-content:space-between;padding:0 7px 0 2px;color:#aaa;flex:none}
.lbody{flex:1;min-height:0;overflow:hidden;position:relative;padding-top:4px;font-family:Inter,"Noto Sans CJK SC",sans-serif}
.li{height:24px;line-height:24px;padding-left:65px;white-space:nowrap;color:#333}
.lg{height:24px;line-height:24px;padding-left:44px;position:relative}
.lg::before{content:"";position:absolute;left:34px;top:10px;border:3px solid transparent;border-top:4px solid #888;border-bottom:0}
.li.act{background:#c2d9f2;margin:1px 0 1px 61px;padding-left:4px;width:324px;height:21px;line-height:21px}
.used{color:#3a87d8}
.vthumb{position:absolute;left:388px;top:26px;width:8px;height:15px;background:#ccc;border-radius:4px}
.hscroll{height:14px;display:flex;align-items:center;flex:none;padding-left:6px;background:#fff}
.hthumb{display:block;width:321px;height:7px;background:#ccc;border-radius:4px;margin:0 37px 0 5px}
.tri-l{border:4px solid transparent;border-right:4px solid #555;border-left:0}
.tri-r{border:4px solid transparent;border-left:4px solid #555;border-right:0}
.attr-wrap{position:relative;flex:1}
.attr{border-collapse:collapse;table-layout:fixed;width:383px}
.c1{width:22.500px}.c2{width:115px}.c3{width:205.500px}.c4{width:40px}
.attr th,.attr td{height:21px;padding:0 0 0 4px;border:1px solid #e0e0e0;font-weight:400;white-space:nowrap;overflow:hidden;line-height:19px;font-family:Inter,"Noto Sans CJK SC",sans-serif}
.attr th{text-align:center;padding:0}
.attr tr td:first-child,.attr tr th:first-child{border-left:0}
.attr td.n{text-align:center;padding:0}
.blue{color:#2a6fe8}
.cb{display:block;width:14px;height:14px;border:1px solid #888;border-radius:2px;margin:0 auto 0 13px;background:#fff;position:relative}
.attr td:last-child{padding:0}
.cb.on{background:#2e75d6;border-color:#2e75d6}
.cb.on::after{content:"";position:absolute;left:3px;top:1px;width:6px;height:8px;border:solid #fff;border-width:0 1.500px 1.500px 0;transform:rotate(40deg)}
.pm{display:inline-block;width:12px;height:12px;border:1px solid #888;border-radius:2px;line-height:9px;text-align:center;font-size:11px;color:#444;font-style:normal;background:#fff;vertical-align:-1px;font-family:"Liberation Mono",monospace}
.grp .pm{margin-right:7px}
.attr td.sub{padding-left:31px;position:relative}
.sub::before{content:"";position:absolute;left:9px;top:-1px;bottom:0;border-left:1px solid #ddd}
.sub::after{content:"";position:absolute;left:9px;top:10px;width:16px;border-top:1px solid #ddd}
.sub.last::before{bottom:10px}
.athumb{position:absolute;left:388px;top:14px;width:8px;height:266px;background:#ccc;border-radius:4px}
.split{width:5px;flex:none;background:#fff;position:relative}
.split-thumb{position:absolute;left:1px;top:432px;width:4px;height:100px;background:#636b74}
.main{flex:1;min-width:0;display:flex;flex-direction:column;position:relative;background:#f0f0f0}
.canvas{height:933px;background:#000;flex:none}
.strip{height:27px;background:#2c2c2c;color:#fff;display:flex;align-items:center;justify-content:center;gap:4px;flex:none;padding-left:234px;font-size:12px;font-weight:500;margin-bottom:4px}
.strip span{letter-spacing:.23px}
.scene{position:absolute;left:0;top:0;width:1856px;height:960px;pointer-events:none}
.watermark{font:22px "Liberation Sans",sans-serif;fill:none;stroke:#14142a;stroke-width:.35}
.tag{font:4.500px "Liberation Mono",monospace;fill:#b5610f}
.tag.dim{fill:#7f7a45}
.axes text{font:14px "Liberation Sans",sans-serif}
.strip-bar{position:absolute;left:996px;top:958px;width:98px;height:3px;background:#8d8d8d}
.detail{flex:1;background:#fff;display:flex;flex-direction:column;min-height:0;overflow:hidden}
.dt-title{height:22px;line-height:22px;background:#f0f0f0;color:#888;padding-left:9px;border-bottom:1px solid #e0e0e0;flex:none}
.dt-tools{height:24px;display:flex;align-items:center;padding-left:6px;gap:15px;flex:none}
.dtb{display:flex;align-items:center;gap:5px}
.dtg{border-collapse:collapse;table-layout:fixed;width:653px;margin-left:3px}
.d1{width:20px}.d2{width:187px}.d3{width:42px}.d4{width:102px}.d5{width:101px}
.dtg th,.dtg td{height:21px;border:1px solid #ddd;font-weight:400;padding:0;text-align:center;white-space:nowrap;position:relative}
.dtg th.hl{background:#7ab8f6;color:#fff}
.dn.sel{background:#7ab8f6;color:#fff;font-weight:700}
.dtg td.dg{text-align:left;padding-left:2px}
.dg .pm{margin-right:6px}
.dtg td.ds{text-align:left;padding-left:31px;font-size:12px}
.ds::before{content:"";position:absolute;left:8px;top:-1px;height:11px;border-left:1px solid #ddd}
.ds::after{content:"";position:absolute;left:8px;top:10px;width:16px;border-top:1px solid #ddd}
.dtg td.dv{text-align:left;padding-left:6px}
.dtg td.cellsel{background:#bfd7ef;border:2px solid #777}
.morebtn{position:absolute;right:5px;top:3px;width:18px;height:15px}

/* dialog */
.dialog{position:absolute;left:610px;top:90px;width:1543px;height:480px;background:#fff;display:flex;flex-direction:column;box-shadow:0 0 6px rgba(0,0,0,.3);border:1px solid #ccc;border-top:0}
.dlg-title{height:28px;flex:none;display:flex;align-items:center;justify-content:space-between;padding:8px 12px 0 10px;font-size:14px}
.win{display:flex;align-items:center;gap:18px}
.w-min{width:10px;border-top:1px solid #555;margin-top:7px}
.w-max{width:10px;height:10px;border:1px solid #555}
.w-x{width:11px;height:11px}
.dlg-tools{height:45px;flex:none;display:flex;align-items:flex-start;border:1px solid #d0d0d0;border-width:1px 1px 2px 0;border-radius:0 3px 3px 0}
.tb{display:flex;flex-direction:column;align-items:center;padding:4px 5px 0;white-space:nowrap;line-height:16px}
.tb svg{width:18px;height:18px;margin-bottom:1px;flex:none}
.tb.off{opacity:.42}
.sep{width:1px;height:36px;background:#ddd;margin:4px 2.500px 0;flex:none}
.ml1{margin-left:1px}.ml5{margin-left:5px}.ml6{margin-left:6px}.ml15{margin-left:15px}
.pg-in{width:58px;height:25px;margin-top:8px;background:#e4e4e4;border:1px solid #cfd8e6;border-radius:3px;padding-left:3px;line-height:23px;color:#999;flex:none}
.pg-sel{width:53px;height:25px;margin:8px 0 0 1px;border:1px solid #d5d5d5;border-radius:3px;padding-left:5px;line-height:23px;position:relative;flex:none}
.pg-sel .caret{position:absolute;right:4px;top:10px}
.dlg-body{flex:1;display:flex;min-height:0;background:#e6e6e6;gap:6px}
.dtree{width:228px;background:#fff;overflow:hidden;position:relative;padding-top:3px;flex:none}
.tn{height:24px;line-height:24px;position:relative;white-space:nowrap;isolation:isolate}
.tn .fd{position:absolute;width:15px;height:16px;top:4px}
.tn .lf{position:absolute;width:12px;height:16px;top:4px;left:65px}
.tn .ar{position:absolute;top:10px;border:3px solid transparent;border-top:4px solid #888;border-bottom:0}
.tn .ar.right{border:3px solid transparent;border-left:4px solid #888;border-right:0;top:8px}
.l1{padding-left:45px}.l1 .ar{left:10px}.l1 .fd{left:23px}
.l2{padding-left:65px}.l2 .ar{left:30px}.l2 .fd{left:43px}
.l3{padding-left:85px}
.tn.on::before{content:"";position:absolute;left:60px;top:2px;width:137px;height:21px;background:#c9e1fa;z-index:-1}
.tree-thumb{position:absolute;left:217px;top:17px;width:8px;height:293px;background:#ccc;border-radius:4px}
.rep{width:781px;background:#fff;position:relative;flex:none;overflow:hidden}
.green{position:absolute;left:0;top:142px;width:4px;height:100px;background:#84c56a;z-index:2}
.green::after{content:"";position:absolute;left:0;top:46px;border:4px solid transparent;border-left:4px solid #fff;border-right:0}
.rt,.st{border-collapse:collapse;table-layout:fixed;font:11px/14px "Liberation Mono","Noto Sans CJK SC",monospace;letter-spacing:-.6px;color:#111}
.rt{width:453px}
.r0{width:14px}.r1{width:101px}.r4{width:35px}
.rt td,.st td{border:1px solid #111;padding:0 2px;height:19px;white-space:nowrap;overflow:visible}
.rt th,.st th{background:#e8e8e8;border:1px solid #ccc;font:12px/14px "Noto Sans CJK SC",sans-serif;letter-spacing:0;color:#222;padding:0;text-align:center}
.rt th{border-bottom:1px solid #111}
.rt th:first-child{background:#fff;border:1px solid #ddd;border-bottom:0}
.rt td.no{background:#f0f0f0;border:1px solid #ddd;border-left:0;text-align:center;padding:0;font:12px "Noto Sans",sans-serif;letter-spacing:0;color:#333;border-right:1px solid #111}
.rt td.nosel{background:#7ab8f6;color:#fff;font-weight:700}
.c{font:12px/16px "Noto Sans CJK SC",sans-serif;letter-spacing:0}
.h44{height:44px}.h32{height:32px}.h33{height:33px}
.rt th.hl,.st th.hl{background:#7ab8f6;color:#fff;border-color:#7ab8f6}
.rt th.big{font-size:14px}
.v{text-align:right}
.rt td.v,.st td.v{padding-right:3px}
.vsel{background:#7cc0fb;outline:2px solid #777;outline-offset:-2px}
.side{flex:1;background:#fff;min-width:0}
.st{width:348px}
.s1{width:277px}.s2{width:28px}.s3{width:43px}
.st th{height:19px;border-bottom:1px solid #aaa;border-left:0}
.h34{height:35px}
.st td.first{border-left:0;border-top:0;padding-left:3px;white-space:nowrap}
.first{line-height:14px}
.first .pm{float:left;margin:6px 6px 0 0}
.first>span{display:block}
.band td{background:#e9f5fd}
.st td{height:20px;border-left:0}
.st .pm{letter-spacing:0}
.st td.t2{padding-left:12px}.t2 .pm{margin-right:6px}
.big{font-size:13px}
.st td.t3{padding-left:22px}.t3 .pm{margin-right:7px}
.st td.t4{padding-left:51px}
.ssel{background:#cfe5fc;outline:2px solid #777;outline-offset:-2px}
.dlg-status{height:22px;flex:none;display:flex;align-items:center;padding-left:16px;background:#fff;border-top:1px solid #ddd;color:#555;position:relative}
.st-l{word-spacing:6px}
.st-m{margin-left:23px}
.st-r{position:absolute;right:23px;top:3px}
.grip{position:absolute;right:2px;bottom:3px;width:9px;height:9px;background:repeating-linear-gradient(135deg,#999 0 1px,transparent 1px 3px)}
.redbox{position:absolute;border:3px solid #f3231a;border-radius:4px;pointer-events:none}
.rb1{left:1835px;top:189px;width:246px;height:164px}
.rb2{left:686px;top:1207px;width:153px;height:83px}
```
